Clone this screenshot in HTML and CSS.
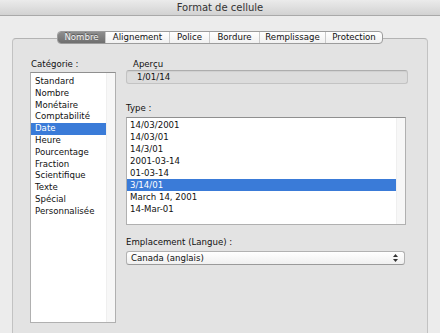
FILE: index.html
```html
<!DOCTYPE html>
<html lang="fr">
<head>
    <meta charset="UTF-8">
    <title>Format de cellule</title>
    <link rel="stylesheet" href="styles.css">
</head>
<body>

<div class="window">
    <div class="titlebar">Format de cellule</div>

    <div class="tabs">
        <div class="tab active">Nombre</div>
        <div class="tab">Alignement</div>
        <div class="tab">Police</div>
        <div class="tab">Bordure</div>
        <div class="tab">Remplissage</div>
        <div class="tab">Protection</div>
    </div>

    <div class="group">
        <div class="col-left">
            <div class="label">Catégorie :</div>
            <div class="listbox category">
                <ul class="items">
                    <li>Standard</li>
                    <li>Nombre</li>
                    <li>Monétaire</li>
                    <li>Comptabilité</li>
                    <li class="selected">Date</li>
                    <li>Heure</li>
                    <li>Pourcentage</li>
                    <li>Fraction</li>
                    <li>Scientifique</li>
                    <li>Texte</li>
                    <li>Spécial</li>
                    <li>Personnalisée</li>
                </ul>
                <div class="track"></div>
            </div>
        </div>

        <div class="col-right">
            <div class="label preview-label">Aperçu</div>
            <div class="preview">1/01/14</div>

            <div class="label type-label">Type :</div>
            <div class="listbox types">
                <ul class="items">
                    <li>14/03/2001</li>
                    <li>14/03/01</li>
                    <li>14/3/01</li>
                    <li>2001-03-14</li>
                    <li>01-03-14</li>
                    <li class="selected">3/14/01</li>
                    <li>March 14, 2001</li>
                    <li>14-Mar-01</li>
                </ul>
                <div class="track"></div>
            </div>

            <div class="label locale-label">Emplacement (Langue) :</div>
            <div class="popup">
                <span>Canada (anglais)</span>
                <svg class="arrows" width="5" height="8" viewBox="0 0 5 8">
                    <path d="M2.5 0 L5 3 L0 3 Z" fill="#333"/>
                    <path d="M0 5 L5 5 L2.5 8 Z" fill="#333"/>
                </svg>
            </div>
        </div>
    </div>
</div>

</body>
</html>
```

FILE: styles.css
```css
* {
    margin: 0;
    padding: 0;
    box-sizing: border-box;
}

body {
    width: 440px;
    height: 333px;
    overflow: hidden;
    background: #ececec;
    font-family: 'DejaVu Sans', Verdana, sans-serif;
    font-size: 8.6px;
    color: #111;
}

.window {
    display: flex;
    flex-direction: column;
    height: 333px;
}

.titlebar {
    height: 16px;
    line-height: 16px;
    text-align: center;
    font-size: 10px;
    color: #333;
    background: linear-gradient(#ebebeb, #d2d2d2);
    border-bottom: 1px solid #a9a9a9;
}

.tabs {
    display: flex;
    width: 326px;
    height: 13px;
    margin: 15px auto 0;
    position: relative;
    z-index: 1;
    border: 1px solid #9c9c9c;
    border-radius: 4px;
    background: linear-gradient(#ffffff, #f1f1f1);
    overflow: hidden;
}

.tab {
    line-height: 11px;
    text-align: center;
    border-left: 1px solid #c9c9c9;
    color: #111;
}

.tab:nth-child(1) { width: 47px; border-left: none; }
.tab:nth-child(2) { width: 64px; }
.tab:nth-child(3) { width: 40px; }
.tab:nth-child(4) { width: 50px; }
.tab:nth-child(5) { width: 66px; }
.tab:nth-child(6) { flex: 1; }

.tab.active {
    background: linear-gradient(#8e8e8e, #6f6f6f);
    color: #f4f4f4;
    text-shadow: 0 -1px 0 #555;
}

.group {
    display: flex;
    gap: 10px;
    flex: 1;
    width: 416px;
    margin: -6px 0 0 12px;
    padding: 20px 0 0 17px;
    background: #e3e3e3;
    border: 1px solid #c2c2c2;
    border-top-color: #b3b3b3;
    border-bottom: none;
    border-radius: 4px 4px 0 0;
}

.label {
    height: 11px;
    line-height: 11px;
}

.col-left {
    width: 86px;
}

.col-left .label {
    margin-left: 1px;
}

.listbox {
    display: flex;
    background: #fff;
    border: 1px solid #b0b0b0;
    border-top-color: #8f8f8f;
}

.items {
    flex: 1;
    list-style: none;
}

.track {
    width: 9px;
    background: #f7f7f7;
    border-left: 1px solid #efefef;
}

.category {
    height: 251px;
    margin-top: 2px;
}

.category .items {
    padding-top: 3px;
}

.category li {
    height: 11.8px;
    line-height: 11.8px;
    padding-left: 4px;
}

.selected {
    background: #3a7bd8;
    color: #fff;
}

.col-right {
    width: 282px;
}

.preview-label {
    margin-left: 7px;
}

.preview {
    height: 14px;
    line-height: 12px;
    padding-left: 10px;
    background: #dcdcdc;
    border: 1px solid #c3c3c3;
    border-top-color: #adadad;
    border-radius: 3px;
    box-shadow: inset 0 1px 1px rgba(0, 0, 0, 0.06);
}

.type-label {
    margin-top: 19px;
}

.types {
    width: 280px;
    height: 108px;
    margin-top: 3px;
}

.types .items {
    padding-top: 1px;
}

.types li {
    height: 12px;
    line-height: 12px;
    padding-left: 3px;
}

.locale-label {
    margin-top: 12px;
}

.popup {
    display: flex;
    align-items: center;
    justify-content: space-between;
    width: 279px;
    height: 14px;
    margin-top: 3px;
    padding: 0 6px 0 4px;
    background: linear-gradient(#ffffff, #f0f0f0);
    border: 1px solid #b2b2b2;
    border-bottom-color: #9a9a9a;
    border-radius: 3px;
}

.arrows {
    display: block;
}
```
